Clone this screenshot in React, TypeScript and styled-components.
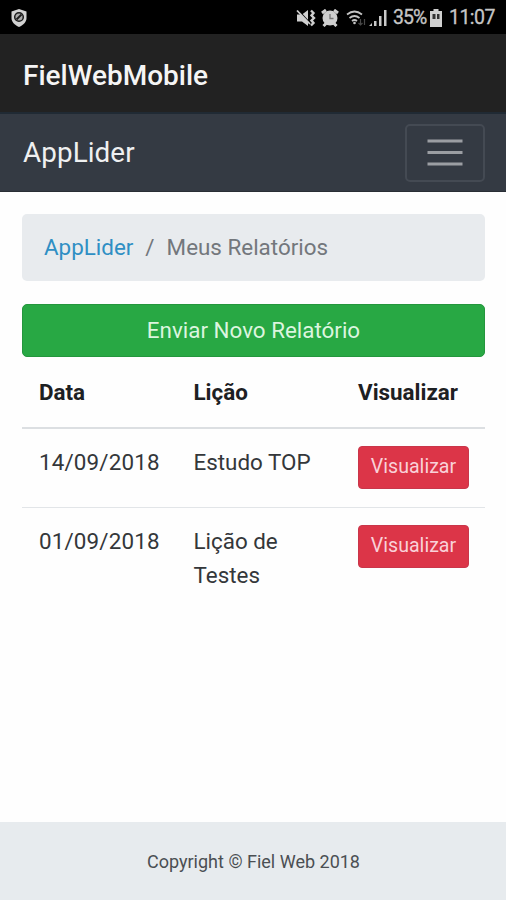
import React from "react";
import styled, { createGlobalStyle } from "styled-components";

const GlobalStyle = createGlobalStyle`
  * { box-sizing: border-box; }
  body { margin: 0; background: #fff; font-family: Roboto, "Liberation Sans", sans-serif; }
`;

const Screen = styled.div`
  display: flex;
  flex-direction: column;
  height: 900px;
  width: 506px;
  overflow: hidden;
  background: #fefefe;
  color: #24282c;
`;

const StatusBar = styled.div`
  flex: none;
  display: flex;
  justify-content: space-between;
  align-items: center;
  height: 34px;
  padding: 2px 11px 0 10px;
  background: #000;
  color: #c6c6c6;
`;

const StatusIcons = styled.div`
  display: flex;
  align-items: center;
  font-size: 19.5px;
  line-height: 24px;
  svg { display: block; flex: none; }
`;

const Percent = styled.span`
  margin-left: 6px;
  width: 34px;
  letter-spacing: -0.9px;
  white-space: nowrap;
  -webkit-text-stroke: 0.3px currentColor;
`;

const Clock = styled.span`
  margin-left: 7px;
  width: 46px;
  letter-spacing: -0.55px;
  white-space: nowrap;
  -webkit-text-stroke: 0.3px currentColor;
`;

const TitleBar = styled.header`
  flex: none;
  display: flex;
  align-items: center;
  height: 78px;
  padding: 4px 23px 0;
  background: #222;
  color: #f5f5f5;
  font-size: 28px;
  font-weight: 500;
`;

const NavBar = styled.nav`
  flex: none;
  display: flex;
  align-items: center;
  justify-content: space-between;
  height: 80px;
  padding: 0 21px 0 23px;
  background: #343a43;
  border-top: 2px solid #202a34;
  border-bottom: 1px solid #292e35;
`;

const Brand = styled.a`
  color: #eff0f1;
  font-size: 27.8px;
  line-height: 42px;
  letter-spacing: 0.1px;
`;

const Toggler = styled.button`
  display: grid;
  place-items: center;
  width: 80px;
  height: 58px;
  padding: 0 0 1px;
  border: 2px solid #444a53;
  border-radius: 5px;
  background: transparent;
`;

const Main = styled.main`
  flex: 1;
  display: flex;
  flex-direction: column;
  padding: 22px 21px 0 22px;
`;

const Breadcrumb = styled.div`
  display: flex;
  align-items: center;
  height: 67px;
  padding: 0 22px 2px;
  border-radius: 5px;
  background: #e8ebee;
  color: #73777c;
  font-size: 22.4px;
`;

const Crumb = styled.a`
  color: #2f8fc4;
`;

const Slash = styled.span`
  padding: 0 12px 0 12px;
`;

const SubmitButton = styled.button`
  flex: none;
  height: 53px;
  margin-top: 23px;
  padding: 0 0 1px;
  border: 1px solid #24963d;
  border-radius: 5px;
  background: #28a844;
  color: #dcf5df;
  font: 400 22.4px Roboto, sans-serif;
`;

const Table = styled.div`
  display: flex;
  flex-direction: column;
  font-size: 22.4px;
  line-height: 34px;
`;

const Row = styled.div<{ $height: number; $head?: boolean }>`
  display: grid;
  grid-template-columns: 154.5px 164.5px 1fr;
  align-items: start;
  height: ${(p) => p.$height}px;
  padding: ${(p) => (p.$head ? "18px" : "16px")} 0 0 17px;
  border-bottom: ${(p) => (p.$head ? "2px solid #dcdfe2" : "0")};
  font-weight: ${(p) => (p.$head ? 700 : 400)};
  color: ${(p) => (p.$head ? "#1d2023" : "#34373a")};
  & + & + & { border-top: 1px solid #e2e5e8; }
`;

const Cell = styled.div<{ $width?: number; $spacing?: number }>`
  width: ${(p) => (p.$width ? `${p.$width}px` : "auto")};
  letter-spacing: ${(p) => p.$spacing ?? 0}px;
`;

const ViewButton = styled.button`
  display: block;
  width: 111px;
  height: 43px;
  margin-top: 1px;
  padding: 0 0 3px;
  border: 1px solid #c9364a;
  border-radius: 4px;
  background: #dc3548;
  color: #f9d1d8;
  font: 400 19.6px Roboto, sans-serif;
`;

const Footer = styled.footer`
  flex: none;
  display: flex;
  align-items: center;
  justify-content: center;
  height: 78px;
  padding: 0 0 0 1px;
  background: #e7ebee;
  color: #4b4f53;
  font-size: 18px;
`;

const ShieldIcon = () => (
  <svg width="18" height="20" viewBox="0 0 18 20">
    <path d="M9 1 16.500 3.500V10c0 4-3 7-7.500 9-4.500-2-7.500-5-7.500-9V3.500Z" fill="#d2d2d2" />
    <circle cx="9" cy="9" r="4.300" fill="#aaa" stroke="#1c1c1c" strokeWidth="1.500" />
    <path d="m6.500 11.500 5-5" stroke="#1c1c1c" strokeWidth="1.800" />
  </svg>
);

const MuteIcon = () => (
  <svg width="20" height="20" viewBox="0 0 20 20" fill="none" stroke="#cfcfcf">
    <path d="M1 6.500h5l6-4.500v16l-6-4.500H1Z" fill="#cfcfcf" stroke="none" />
    <path d="m3 3 11 12" stroke="#000" strokeWidth="1.200" />
    <path d="m1 2.500 13 13.500" strokeWidth="1.800" />
    <path d="m15 2.500 2.500 2.500-2 2.500 2.500 2.500-2.500 2.500 2 2.500-2.500 2.500" strokeWidth="2.400" />
  </svg>
);

const AlarmIcon = () => (
  <svg width="18" height="18" viewBox="0 0 18 18">
    <path d="m1 4 4-3M17 4l-4-3M2.500 17l3-3M15.500 17l-3-3" stroke="#cfcfcf" strokeWidth="3" />
    <circle cx="9" cy="9" r="7.500" fill="#cfcfcf" />
    <path d="M9 5v4.500h3.500" fill="none" stroke="#777" strokeWidth="1.300" />
  </svg>
);

const WifiIcon = () => (
  <svg width="20" height="18" viewBox="0 0 20 18" fill="none" stroke="#c4c4c4" strokeWidth="1.700">
    <path d="M1 5.500q7.500-6 15 0M3.500 9q5-4 10 0M6 12q2.500-2 5 0" />
    <circle cx="8.500" cy="14" r="1.300" fill="#c4c4c4" stroke="none" />
    <path d="M14.500 10v6m-2-2 2 2 2-2M18.500 16v-6" stroke="#484848" strokeWidth="1.200" />
  </svg>
);

const SignalIcon = () => (
  <svg width="18" height="18" viewBox="0 0 18 18" fill="#c8c8c8">
    <path d="M0 17h3v-3ZM5 12h2.500v5H5ZM10 7h2.500v10H10ZM15 1h2.500v16H15Z" />
  </svg>
);

const BatteryIcon = () => (
  <svg width="12" height="18" viewBox="0 0 12 18">
    <path d="M3.500 0h5v2H12v16H0V2h3.500Z" fill="#d0d0d0" />
    <path d="M2.500 5h7v5h-7Z" fill="#333" />
    <path d="M5.500 5h1.500v5H5.500Z" fill="#d0d0d0" />
  </svg>
);

const MenuIcon = () => (
  <svg width="36" height="27" viewBox="0 0 36 27" stroke="#9b9ea3" strokeWidth="3">
    <path d="M.5 2h35M.5 13.500h35M.5 25h35" />
  </svg>
);

const IconSlot = styled.span<{ $gap: number }>`
  margin-left: ${(p) => p.$gap}px;
`;

const reports = [
  { date: "14/09/2018", lesson: "Estudo TOP", height: 78 },
  { date: "01/09/2018", lesson: "Lição de Testes", height: 100 },
];

export default function App() {
  return (
    <Screen>
      <GlobalStyle />
      <StatusBar>
        <ShieldIcon />
        <StatusIcons>
          <MuteIcon />
          <IconSlot $gap={5}><AlarmIcon /></IconSlot>
          <IconSlot $gap={7}><WifiIcon /></IconSlot>
          <IconSlot $gap={3}><SignalIcon /></IconSlot>
          <Percent>35%</Percent>
          <IconSlot $gap={3}><BatteryIcon /></IconSlot>
          <Clock>11:07</Clock>
        </StatusIcons>
      </StatusBar>
      <TitleBar>FielWebMobile</TitleBar>
      <NavBar>
        <Brand>AppLider</Brand>
        <Toggler aria-label="Menu"><MenuIcon /></Toggler>
      </NavBar>
      <Main>
        <Breadcrumb>
          <Crumb>AppLider</Crumb>
          <Slash>/</Slash>
          <span>Meus Relatórios</span>
        </Breadcrumb>
        <SubmitButton>Enviar Novo Relatório</SubmitButton>
        <Table>
          <Row $height={72} $head>
            <Cell>Data</Cell>
            <Cell>Lição</Cell>
            <Cell>Visualizar</Cell>
          </Row>
          {reports.map((r) => (
            <Row key={r.date} $height={r.height}>
              <Cell $spacing={0.15}>{r.date}</Cell>
              <Cell $width={130}>{r.lesson}</Cell>
              <ViewButton>Visualizar</ViewButton>
            </Row>
          ))}
        </Table>
      </Main>
      <Footer>Copyright © Fiel Web 2018</Footer>
    </Screen>
  );
}
